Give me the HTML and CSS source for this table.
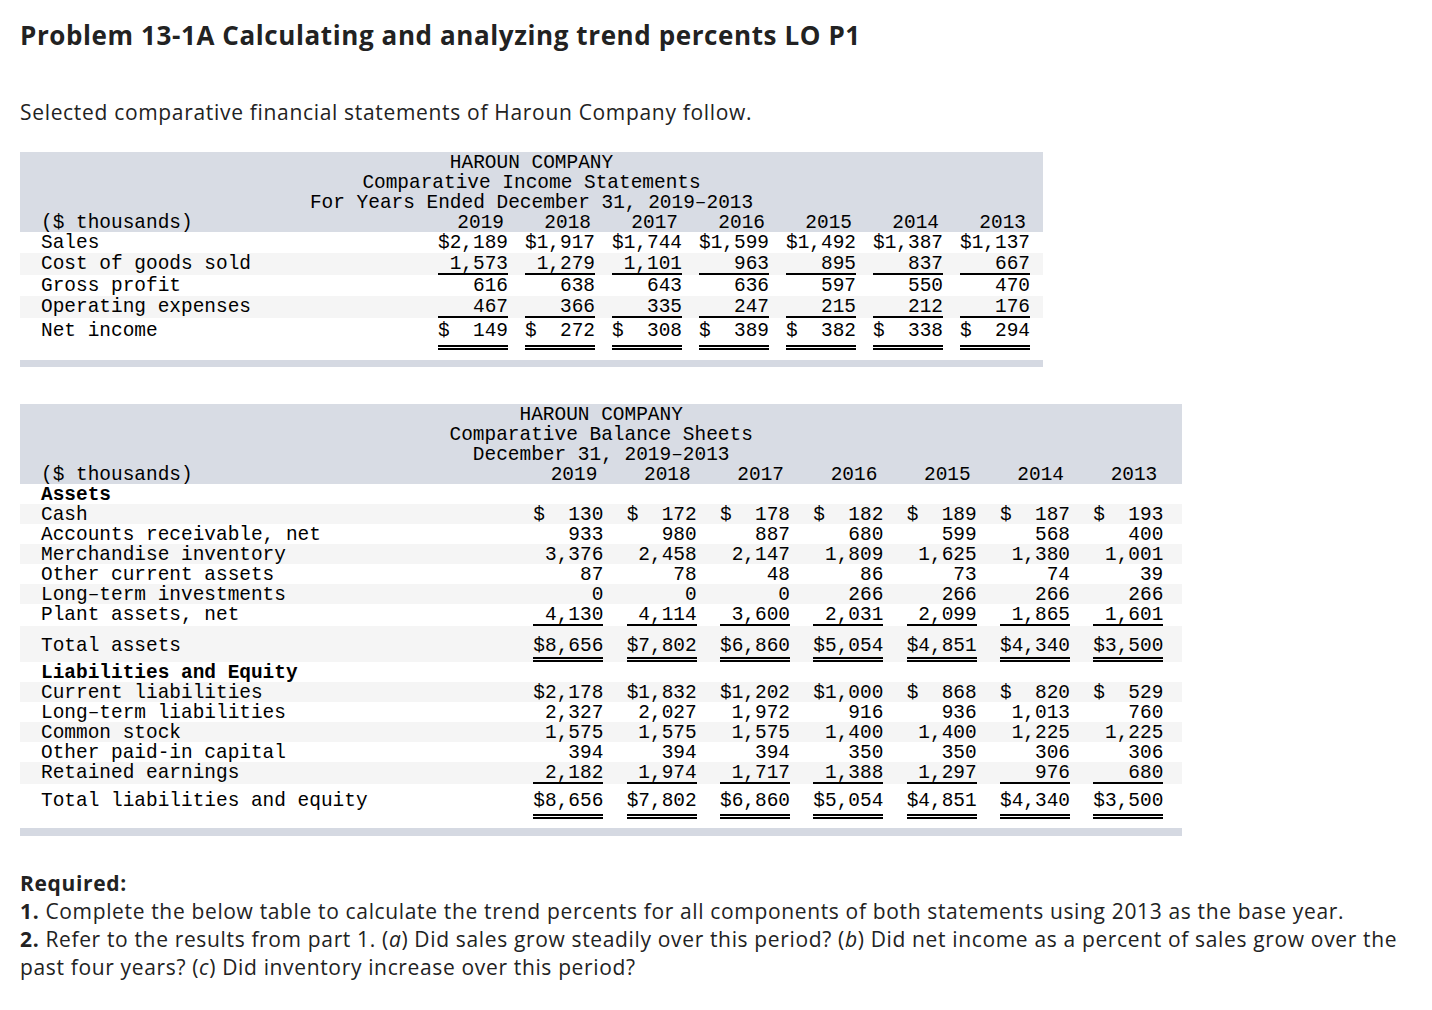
FILE: index.html
```html
<!DOCTYPE html>
<html lang="en">
<head>
<meta charset="utf-8">
<title>Problem 13-1A</title>
<link rel="stylesheet" href="styles.css">
</head>
<body>
<main class="page">
  <h1 class="title">Problem 13-1A Calculating and analyzing trend percents LO P1</h1>
  <p class="intro">Selected comparative financial statements of Haroun Company follow.</p>

  <table class="statement income">
    <colgroup><col class="col-label"><col class="col-val" span="7"><col class="col-pad"></colgroup>
    <thead>
      <tr><th colspan="9" class="caption">HAROUN COMPANY</th></tr>
      <tr><th colspan="9" class="caption">Comparative Income Statements</th></tr>
      <tr><th colspan="9" class="caption">For Years Ended December 31, 2019–2013</th></tr>
      <tr><th class="hlabel">($ thousands)</th><th class="year">2019</th><th class="year">2018</th><th class="year">2017</th><th class="year">2016</th><th class="year">2015</th><th class="year">2014</th><th class="year">2013</th><th></th></tr>
    </thead>
    <tbody>
      <tr><td class="label">Sales</td><td><span class="v">$2,189</span></td><td><span class="v">$1,917</span></td><td><span class="v">$1,744</span></td><td><span class="v">$1,599</span></td><td><span class="v">$1,492</span></td><td><span class="v">$1,387</span></td><td><span class="v">$1,137</span></td><td></td></tr>
      <tr class="u"><td class="label">Cost of goods sold</td><td><span class="v">1,573</span></td><td><span class="v">1,279</span></td><td><span class="v">1,101</span></td><td><span class="v">963</span></td><td><span class="v">895</span></td><td><span class="v">837</span></td><td><span class="v">667</span></td><td></td></tr>
      <tr><td class="label">Gross profit</td><td><span class="v">616</span></td><td><span class="v">638</span></td><td><span class="v">643</span></td><td><span class="v">636</span></td><td><span class="v">597</span></td><td><span class="v">550</span></td><td><span class="v">470</span></td><td></td></tr>
      <tr class="u"><td class="label">Operating expenses</td><td><span class="v">467</span></td><td><span class="v">366</span></td><td><span class="v">335</span></td><td><span class="v">247</span></td><td><span class="v">215</span></td><td><span class="v">212</span></td><td><span class="v">176</span></td><td></td></tr>
      <tr class="total net"><td class="label">Net income</td><td><span class="v">$  149</span></td><td><span class="v">$  272</span></td><td><span class="v">$  308</span></td><td><span class="v">$  389</span></td><td><span class="v">$  382</span></td><td><span class="v">$  338</span></td><td><span class="v">$  294</span></td><td></td></tr>
    </tbody>
    <tfoot><tr><td colspan="9" class="bar"></td></tr></tfoot>
  </table>

  <table class="statement balance">
    <colgroup><col class="col-label"><col class="col-val" span="7"><col class="col-pad"></colgroup>
    <thead>
      <tr><th colspan="9" class="caption">HAROUN COMPANY</th></tr>
      <tr><th colspan="9" class="caption">Comparative Balance Sheets</th></tr>
      <tr><th colspan="9" class="caption">December 31, 2019–2013</th></tr>
      <tr><th class="hlabel">($ thousands)</th><th class="year">2019</th><th class="year">2018</th><th class="year">2017</th><th class="year">2016</th><th class="year">2015</th><th class="year">2014</th><th class="year">2013</th><th></th></tr>
    </thead>
    <tbody>
      <tr class="sec"><td class="label section">Assets</td><td colspan="8"></td></tr>
      <tr><td class="label">Cash</td><td><span class="v">$  130</span></td><td><span class="v">$  172</span></td><td><span class="v">$  178</span></td><td><span class="v">$  182</span></td><td><span class="v">$  189</span></td><td><span class="v">$  187</span></td><td><span class="v">$  193</span></td><td></td></tr>
      <tr><td class="label">Accounts receivable, net</td><td><span class="v">933</span></td><td><span class="v">980</span></td><td><span class="v">887</span></td><td><span class="v">680</span></td><td><span class="v">599</span></td><td><span class="v">568</span></td><td><span class="v">400</span></td><td></td></tr>
      <tr><td class="label">Merchandise inventory</td><td><span class="v">3,376</span></td><td><span class="v">2,458</span></td><td><span class="v">2,147</span></td><td><span class="v">1,809</span></td><td><span class="v">1,625</span></td><td><span class="v">1,380</span></td><td><span class="v">1,001</span></td><td></td></tr>
      <tr><td class="label">Other current assets</td><td><span class="v">87</span></td><td><span class="v">78</span></td><td><span class="v">48</span></td><td><span class="v">86</span></td><td><span class="v">73</span></td><td><span class="v">74</span></td><td><span class="v">39</span></td><td></td></tr>
      <tr><td class="label">Long–term investments</td><td><span class="v">0</span></td><td><span class="v">0</span></td><td><span class="v">0</span></td><td><span class="v">266</span></td><td><span class="v">266</span></td><td><span class="v">266</span></td><td><span class="v">266</span></td><td></td></tr>
      <tr class="u"><td class="label">Plant assets, net</td><td><span class="v">4,130</span></td><td><span class="v">4,114</span></td><td><span class="v">3,600</span></td><td><span class="v">2,031</span></td><td><span class="v">2,099</span></td><td><span class="v">1,865</span></td><td><span class="v">1,601</span></td><td></td></tr>
      <tr class="total mid"><td class="label">Total assets</td><td><span class="v">$8,656</span></td><td><span class="v">$7,802</span></td><td><span class="v">$6,860</span></td><td><span class="v">$5,054</span></td><td><span class="v">$4,851</span></td><td><span class="v">$4,340</span></td><td><span class="v">$3,500</span></td><td></td></tr>
      <tr class="sec"><td class="label section">Liabilities and Equity</td><td colspan="8"></td></tr>
      <tr><td class="label">Current liabilities</td><td><span class="v">$2,178</span></td><td><span class="v">$1,832</span></td><td><span class="v">$1,202</span></td><td><span class="v">$1,000</span></td><td><span class="v">$  868</span></td><td><span class="v">$  820</span></td><td><span class="v">$  529</span></td><td></td></tr>
      <tr><td class="label">Long–term liabilities</td><td><span class="v">2,327</span></td><td><span class="v">2,027</span></td><td><span class="v">1,972</span></td><td><span class="v">916</span></td><td><span class="v">936</span></td><td><span class="v">1,013</span></td><td><span class="v">760</span></td><td></td></tr>
      <tr><td class="label">Common stock</td><td><span class="v">1,575</span></td><td><span class="v">1,575</span></td><td><span class="v">1,575</span></td><td><span class="v">1,400</span></td><td><span class="v">1,400</span></td><td><span class="v">1,225</span></td><td><span class="v">1,225</span></td><td></td></tr>
      <tr><td class="label">Other paid-in capital</td><td><span class="v">394</span></td><td><span class="v">394</span></td><td><span class="v">394</span></td><td><span class="v">350</span></td><td><span class="v">350</span></td><td><span class="v">306</span></td><td><span class="v">306</span></td><td></td></tr>
      <tr class="u"><td class="label">Retained earnings</td><td><span class="v">2,182</span></td><td><span class="v">1,974</span></td><td><span class="v">1,717</span></td><td><span class="v">1,388</span></td><td><span class="v">1,297</span></td><td><span class="v">976</span></td><td><span class="v">680</span></td><td></td></tr>
      <tr class="total end"><td class="label">Total liabilities and equity</td><td><span class="v">$8,656</span></td><td><span class="v">$7,802</span></td><td><span class="v">$6,860</span></td><td><span class="v">$5,054</span></td><td><span class="v">$4,851</span></td><td><span class="v">$4,340</span></td><td><span class="v">$3,500</span></td><td></td></tr>
    </tbody>
    <tfoot><tr><td colspan="9" class="bar"></td></tr></tfoot>
  </table>

  <section class="required">
    <p class="req-head">Required:</p>
    <p><b>1.</b> Complete the below table to calculate the trend percents for all components of both statements using 2013 as the base year.</p>
    <p><b>2.</b> Refer to the results from part 1. (<i>a</i>) Did sales grow steadily over this period? (<i>b</i>) Did net income as a percent of sales grow over the past four years? (<i>c</i>) Did inventory increase over this period?</p>
  </section>
</main>
</body>
</html>
```

FILE: styles.css
```css
* {
  box-sizing: border-box;
}

body {
  margin: 0;
  background: #ffffff;
  color: #222222;
  font-family: "Open Sans", Lato, sans-serif;
}

.page {
  padding: 19px 12px 20px 20px;
}

.title {
  margin: 0;
  font-size: 26px;
  line-height: 32px;
  font-weight: 700;
  letter-spacing: 0.6px;
}

.intro {
  margin: 47px 0 0;
  font-size: 21px;
  line-height: 28px;
  letter-spacing: 0.68px;
}

/* Financial statement tables */
.statement {
  border-collapse: collapse;
  border-spacing: 0;
  table-layout: fixed;
  font-family: "Liberation Mono", "DejaVu Sans Mono", monospace;
  font-size: 19.44px;
  color: #000;
}

.statement th,
.statement td {
  padding: 0;
  vertical-align: top;
  font-weight: 400;
}

.income {
  width: 1023px;
  margin-top: 26px;
}

.balance {
  width: 1162px;
  margin-top: 37px;
}

.income .col-label { width: 401px; }
.income .col-val { width: 87px; }
.income .col-pad { width: 13px; }

.balance .col-label { width: 490px; }
.balance .col-val { width: 93.33px; }
.balance .col-pad { width: 19px; }

.statement thead th {
  background: #d8dce4;
  padding-top: 2px;
  line-height: 18px;
  white-space: pre;
}

.statement .caption {
  text-align: center;
}

.statement .hlabel {
  text-align: left;
  padding-left: 21px;
}

.statement .year {
  text-align: right;
}

.income .year { padding-right: 4px; }
.balance .year { padding-right: 6px; }

.statement tbody tr:nth-child(even) {
  background: #f5f5f5;
}

/* Row label cells */
.statement .label {
  padding-left: 21px;
  padding-top: 4px;
  white-space: nowrap;
  line-height: 15px;
}

.statement .section {
  font-weight: 700;
}

/* Value boxes */
.v {
  display: block;
  width: 6ch;
  margin-left: auto;
  padding-top: 4px;
  text-align: right;
  white-space: pre;
  line-height: 15px;
  border-bottom: 2px solid transparent;
}

.balance .label,
.balance .v {
  line-height: 14px;
}

.statement .sec td {
  height: 20px;
}

.u .v {
  border-bottom-color: #000;
  padding-bottom: 1px;
}

.balance .u .v {
  padding-bottom: 2px;
}

.total .v {
  border-bottom: 5px double #000;
}

/* Net income row */
.statement .net td {
  padding-top: 2px;
  padding-bottom: 10px;
}

.statement .net td.label {
  padding-top: 6px;
}

.net .v {
  padding-bottom: 6px;
}

/* Total assets row */
.statement .mid td {
  padding-top: 9px;
  padding-bottom: 0;
}

.statement .mid td.label {
  padding-top: 13px;
}

.mid .v {
  padding-bottom: 4px;
}

/* Total liabilities and equity row */
.statement .end td {
  padding-top: 6px;
  padding-bottom: 9px;
}

.statement .end td.label {
  padding-top: 10px;
}

.end .v {
  padding-bottom: 6px;
}

.statement .bar {
  height: 7px;
  padding: 0;
  background: #d5d9e2;
}

.balance .bar {
  height: 8px;
}

/* Required text */
.required {
  margin-top: 33px;
  font-size: 21px;
  line-height: 28px;
  letter-spacing: 0.65px;
}

.required p {
  margin: 0;
}

.req-head {
  font-weight: 700;
}
```
